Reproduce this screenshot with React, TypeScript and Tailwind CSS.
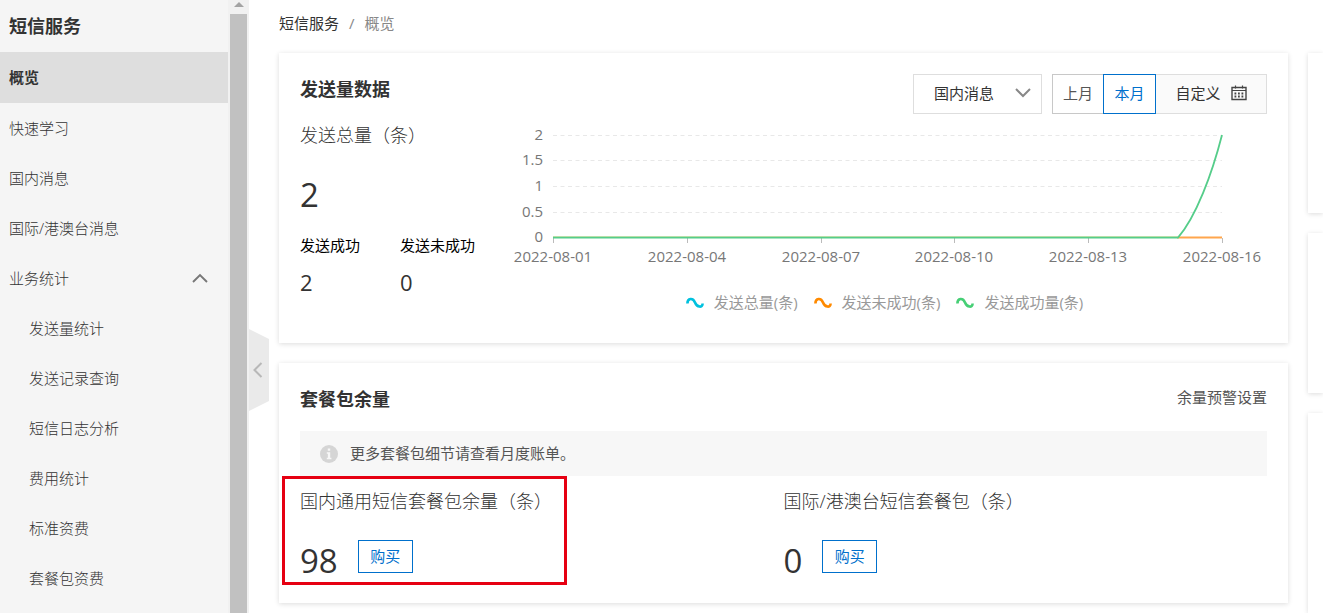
import { useState } from "react";

const topLinks = ["快速学习", "国内消息", "国际/港澳台消息"];
const statLinks = ["发送量统计", "发送记录查询", "短信日志分析", "费用统计", "标准资费", "套餐包资费"];

const card = "bg-white shadow-[0_1px_5px_rgba(0,0,0,0.14)]";

const yTicks = [
  { label: "2", y: 21 },
  { label: "1.5", y: 46 },
  { label: "1", y: 72 },
  { label: "0.5", y: 98 },
];

const xTicks = [
  { label: "2022-08-01", x: 43 },
  { label: "2022-08-04", x: 177 },
  { label: "2022-08-07", x: 311 },
  { label: "2022-08-10", x: 444 },
  { label: "2022-08-13", x: 578 },
  { label: "2022-08-16", x: 712 },
];

const legend = [
  { label: "发送总量(条)", color: "#00c1de" },
  { label: "发送未成功(条)", color: "#ff8a00" },
  { label: "发送成功量(条)", color: "#46cf75" },
];

function Sidebar() {
  return (
    <nav className="w-[228px] shrink-0 bg-[#f5f5f5] text-[15px] text-[#333]">
      <h1 className="flex h-[52px] items-center pl-[9px] text-lg font-bold">短信服务</h1>
      <a href="#overview" className="flex h-[51px] items-center bg-[#dedede] pl-[9px] font-bold">
        概览
      </a>
      {topLinks.map((t) => (
        <a key={t} href="#" className="flex h-[50px] items-center pl-[9px] font-light">
          {t}
        </a>
      ))}
      <button type="button" aria-expanded="true" className="flex h-[50px] w-full items-center justify-between pr-5 pl-[9px] font-light">
        业务统计
        <svg width="16" height="10" viewBox="0 0 16 10" fill="none" stroke="#777" strokeWidth="1.9">
          <path d="M1 9 8 2l7 7" />
        </svg>
      </button>
      {statLinks.map((t) => (
        <a key={t} href="#" className="flex h-[50px] items-center pl-[29px] font-light">
          {t}
        </a>
      ))}
    </nav>
  );
}

function ScrollTrack() {
  return (
    <div aria-hidden="true" className="flex w-[21px] shrink-0 flex-col bg-[#f1f1f1] pr-0.5 pl-0.5">
      <div className="flex h-3.5 items-start justify-center pt-0.5">
        <svg width="10" height="5" viewBox="0 0 10 5" fill="#a3a3a3">
          <path d="M5 0 10 5H0z" />
        </svg>
      </div>
      <div className="flex-1 bg-[#c1c1c1]" />
    </div>
  );
}

function Chart() {
  return (
    <svg viewBox="0 0 757 160" className="w-full text-[15px]" fill="none" role="img" aria-label="发送量">
      {yTicks.map((t) => (
        <g key={t.label}>
          <path d={`M43 ${t.y + 0.5}H712`} stroke="#e8e8e8" strokeDasharray="4 3.5" />
          <text x="33" y={t.y + 5} textAnchor="end" fill="#777">
            {t.label}
          </text>
        </g>
      ))}
      <text x="33" y="128" textAnchor="end" fill="#777">
        0
      </text>
      {xTicks.map((t) => (
        <g key={t.label}>
          <path d={`M${t.x + 0.5} 124v5`} stroke="#bbb" />
          <text x={t.x} y="148" textAnchor="middle" fill="#777">
            {t.label}
          </text>
        </g>
      ))}
      <path d="M667 123.5H712" stroke="#ffa64d" strokeWidth="2" />
      <path d="M43 122.5H668" stroke="#d9e3b0" />
      <path d="M43 123.7H668C686 103 702 60 712 21" stroke="#55cd8a" strokeWidth="1.8" />
    </svg>
  );
}

function SendCard() {
  const [range, setRange] = useState("本月");
  return (
    <section className={`${card} px-[21px] pt-[21px] pb-[30px]`}>
      <header className="flex items-start justify-between">
        <h2 className="text-lg leading-[30px] font-bold text-[#333]">发送量数据</h2>
        <div className="flex gap-2.5 text-[15px] text-[#333]">
          <div className="relative">
            <select
              aria-label="消息类型"
              className="h-10 w-[129px] appearance-none border border-[#dedede] bg-white pb-0.5 pl-5"
            >
              <option>国内消息</option>
              <option>国际/港澳台消息</option>
            </select>
            <svg
              className="pointer-events-none absolute top-[14px] right-[11px]"
              width="16"
              height="10"
              viewBox="0 0 16 10"
              fill="none"
              stroke="#888"
              strokeWidth="2"
            >
              <path d="M1 1 8 8l7-7" />
            </svg>
          </div>
          <div className="flex">
            <button
              type="button"
              onClick={() => setRange("上月")}
              className="h-10 w-[51px] border border-r-0 border-[#c8c8c8] pb-0.5 text-[#555]"
            >
              上月
            </button>
            <button
              type="button"
              aria-pressed={range === "本月"}
              onClick={() => setRange("本月")}
              className="h-10 w-[53px] border border-[#0070cc] pb-0.5 text-[#0070cc]"
            >
              本月
            </button>
            <button
              type="button"
              className="flex h-10 w-[111px] items-center justify-center gap-2.5 border border-l-0 border-[#dedede] bg-[#fafafa] pb-0.5"
            >
              自定义
              <svg width="16" height="16" viewBox="0 0 16 16" fill="none" stroke="#444">
                <path d="M1 2.500h14v12H1z" strokeWidth="1.4" />
                <path d="M1 5.500h14M4.500 .5v3M11.500 .5v3" strokeWidth="1.2" />
                <path d="M3.500 8.500h9.500M3.500 11.500h9.500" strokeWidth="1.8" strokeDasharray="1.8 1.700" />
              </svg>
            </button>
          </div>
        </div>
      </header>
      <div className="flex">
        <div className="w-[210px] shrink-0">
          <h3 className="text-lg leading-[42px] font-light text-[#333]">发送总量（条）</h3>
          <p className="text-[33px] leading-[78px] text-[#333]">2</p>
          <dl className="flex">
            <div className="w-[100px]">
              <dt className="text-[15px] leading-[22px] text-black">发送成功</dt>
              <dd className="mt-2 text-[22px] leading-9 text-[#333]">2</dd>
            </div>
            <div>
              <dt className="text-[15px] leading-[22px] text-black">发送未成功</dt>
              <dd className="mt-2 text-[22px] leading-9 text-[#333]">0</dd>
            </div>
          </dl>
        </div>
        <div className="min-w-0 flex-1">
          <Chart />
          <ul className="mt-[18px] mb-px flex justify-center gap-4 pr-2 text-[15px] leading-5 text-[#999]">
            {legend.map((l) => (
              <li key={l.label} className="flex items-center gap-2.5">
                <svg width="18" height="12" viewBox="0 0 18 12" fill="none" stroke={l.color} strokeWidth="2.6">
                  <path d="M1.400 7.500C1.400 2 7 1.500 9 6.500S16.600 12 16.600 7.500" />
                </svg>
                {l.label}
              </li>
            ))}
          </ul>
        </div>
      </div>
    </section>
  );
}

function Balance({ title, value, marked }: { title: string; value: string; marked?: boolean }) {
  return (
    <div className="relative h-[106px]">
      <h3 className="text-lg leading-[50px] font-light text-[#333]">{title}</h3>
      <div className="flex items-start gap-5">
        <span className="text-[33px] leading-[70px] text-[#333]">{value}</span>
        <button type="button" className="mt-3.5 h-[33px] w-[55px] border border-[#0070cc] text-[15px] text-[#0070cc]">
          购买
        </button>
      </div>
      {marked && (
        <div className="pointer-events-none absolute top-0 -left-[18px] h-[109px] w-[285px] border-3 border-[#e60012]" />
      )}
    </div>
  );
}

function PackageCard() {
  return (
    <section className={`${card} p-[21px]`}>
      <header className="flex justify-between">
        <h2 className="text-lg leading-[30px] font-bold text-[#333]">套餐包余量</h2>
        <a href="#" className="text-[15px] leading-[26px] text-[#555]">
          余量预警设置
        </a>
      </header>
      <div className="mt-[17px] flex h-[45px] items-center gap-3 bg-[#f7f7f7] pl-5 text-[15px] text-[#555]">
        <svg width="18" height="18" viewBox="0 0 18 18">
          <circle cx="9" cy="9" r="9" fill="#d5d5d5" />
          <path d="M7.800 3.500h2.400v2.200H7.800zM6.800 7.200h3.400v5.600h1.200v1.500H6.800v-1.500h1.100V8.700H6.800z" fill="#f7f7f7" />
        </svg>
        更多套餐包细节请查看月度账单。
      </div>
      <div className="grid grid-cols-2">
        <Balance title="国内通用短信套餐包余量（条）" value="98" marked />
        <Balance title="国际/港澳台短信套餐包（条）" value="0" />
      </div>
    </section>
  );
}

export default function App() {
  return (
    <div
      lang="zh-CN"
      className="flex min-h-screen overflow-hidden bg-white font-['Open_Sans','Noto_Sans_CJK_SC',sans-serif]"
    >
      <Sidebar />
      <ScrollTrack />
      <main className="relative flex min-w-0 flex-1 flex-col pl-[30px]">
        <button type="button" aria-label="收起菜单" className="absolute top-[329px] left-0">
          <svg width="20" height="82" viewBox="0 0 20 82" fill="none">
            <path d="M0 0 20 10V72L0 82z" fill="#eaeaea" />
            <path d="M12.500 34 5.500 41l7 7" stroke="#b8b8b8" strokeWidth="2" />
          </svg>
        </button>
        <nav className="flex h-[53px] items-center gap-2.5 pb-1.5 text-[15px] text-[#888]">
          <a href="#" className="text-[#333]">
            短信服务
          </a>
          <span>/</span>
          <span>概览</span>
        </nav>
        <div className="flex flex-1 gap-5">
          <div className="flex min-w-0 flex-1 flex-col gap-5">
            <SendCard />
            <PackageCard />
          </div>
          <aside className="flex w-[15px] shrink-0 flex-col gap-5">
            <div className={`${card} h-40`} />
            <div className={`${card} h-40`} />
            <div className={`${card} flex-1`} />
          </aside>
        </div>
      </main>
    </div>
  );
}
